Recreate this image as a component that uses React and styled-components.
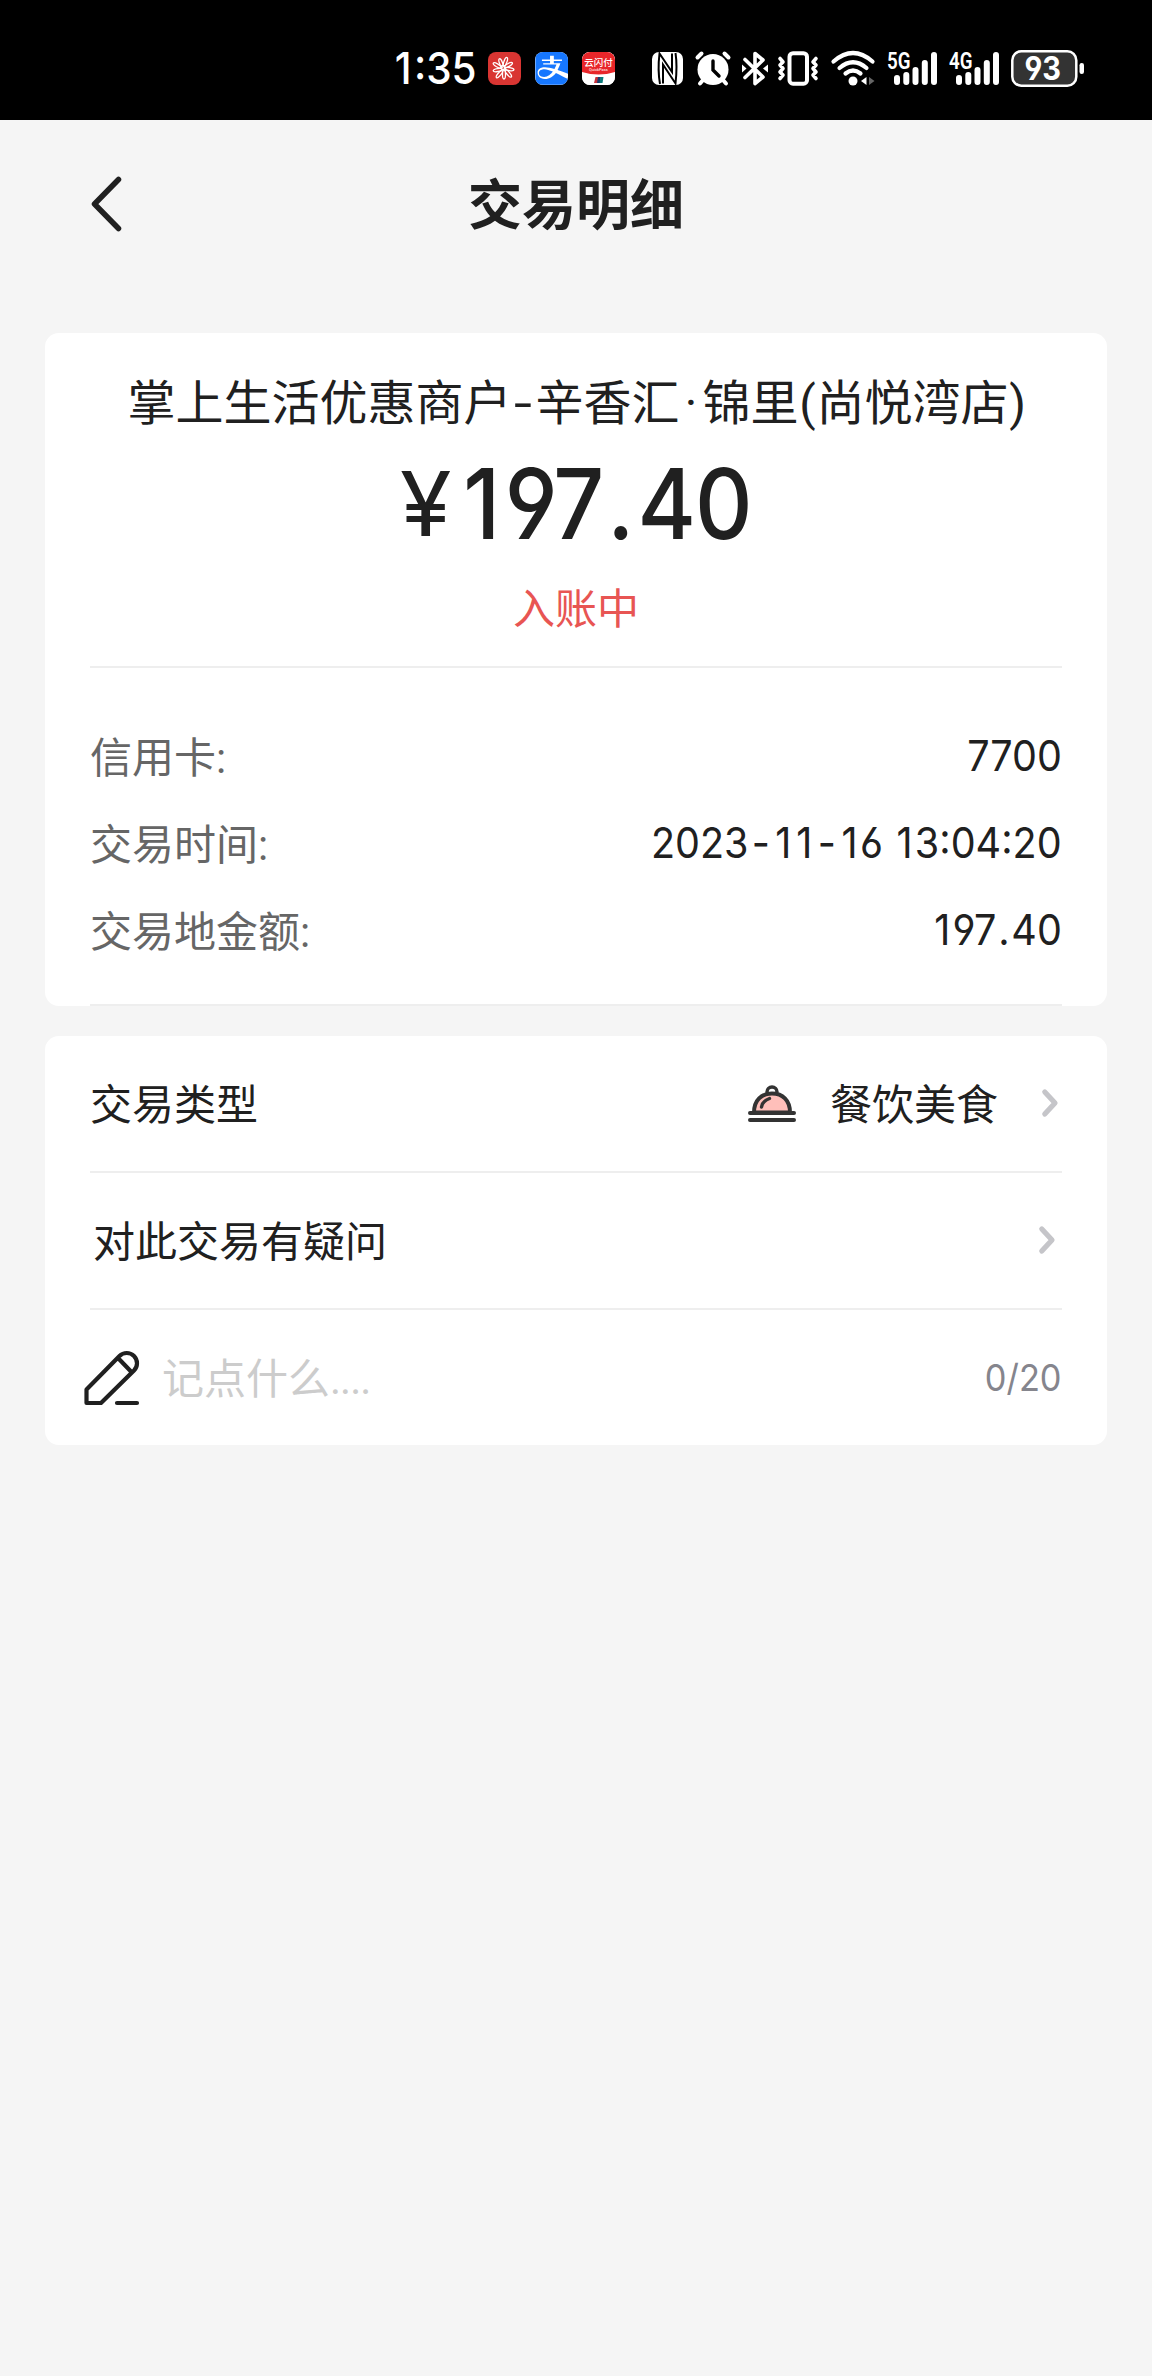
import React from 'react';
import styled, { createGlobalStyle } from 'styled-components';
import { FaAlipay } from "react-icons/fa6";

const GlobalStyle = createGlobalStyle`
  * {
    box-sizing: border-box;
  }

  body {
    margin: 0;
    background-color: #f5f5f5;
    color: #202020;
    font-family: Roboto, 'Noto Sans CJK SC', sans-serif;
  }

  svg {
    display: block;
    flex-shrink: 0;
    overflow: visible;
  }
`;

const Screen = styled.div`
  width: 1152px;
  min-height: 2376px;
  background-color: #f5f5f5;
`;

// narrow digits with open 6 and 9
const Digits = styled.span`
  display: inline-block;
  font-family: Inter, 'Noto Sans CJK SC', sans-serif;
  font-feature-settings: 'cv03', 'cv04', 'calt';
  white-space: pre;
`;

const Pad = styled.span`
  padding: 0 ${(props) => props.$size}em;
`;

const StatusBar = styled.div`
  display: flex;
  align-items: center;
  justify-content: flex-end;
  height: 120px;
  padding: 16px 68px 0 0;
  background-color: #000;
  color: #fff;
`;

const Clock = styled(Digits)`
  font-size: 44px;
  line-height: 44px;
  font-weight: 500;
  transform: scaleX(0.92);
  transform-origin: right;
`;

const StatusItem = styled.div`
  display: flex;
  margin-left: ${(props) => props.$gap}px;
`;

const AppBadge = styled.div`
  display: flex;
  align-items: center;
  justify-content: center;
  width: 33px;
  height: 33px;
  border-radius: 8px;
  overflow: hidden;
  margin-left: ${(props) => props.$gap}px;
  background: ${(props) => props.$bg};
  color: #1677ff;
`;

const Header = styled.div`
  display: grid;
  grid-template-columns: 90px 1fr 90px;
  align-items: center;
  height: 168px;
`;

const BackButton = styled.button`
  border: 0;
  padding: 0;
  background: none;
  justify-self: end;
  width: 0;
`;

const Title = styled.h1`
  margin: 6px 0 0;
  font-size: 54px;
  line-height: 80px;
  font-weight: 700;
  text-align: center;
`;

const Card = styled.section`
  margin: ${(props) => props.$top}px 45px 0;
  padding: 0 45px;
  height: ${(props) => props.$height}px;
  border-radius: 14px;
  background-color: #fff;
`;

const Summary = styled.div`
  display: flex;
  flex-direction: column;
  align-items: center;
  height: 335px;
  padding-top: 35px;
  border-bottom: 2px solid #eee;
`;

const Merchant = styled.div`
  padding-left: 2px;
  font-size: 48px;
  line-height: 72px;
  white-space: nowrap;
`;

const Mark = styled.span`
  display: inline-block;
  width: ${(props) => props.$width}px;
  text-align: center;
  transform: scaleX(${(props) => props.$stretch || 1});
`;

const Amount = styled.div`
  display: flex;
  align-items: baseline;
  width: 352px;
  margin-top: 14px;
  line-height: 100px;
`;

const Currency = styled(Digits)`
  flex: none;
  width: 58px;
  font-size: 89px;
  line-height: 100px;
  font-weight: 400;
  transform: translateY(-3px) scaleX(1.05);
  transform-origin: left;
`;

const Total = styled(Digits)`
  flex: none;
  font-size: 98px;
  line-height: 100px;
  font-weight: 500;
  letter-spacing: -1px;
  transform: scaleX(0.91);
  transform-origin: left;
`;

const Status = styled.div`
  margin-top: 22px;
  font-size: 42px;
  line-height: 62px;
  color: #e85553;
`;

const Details = styled.div`
  height: 338px;
  padding-top: 45px;
  border-bottom: 2px solid #eee;
`;

const DetailRow = styled.div`
  display: flex;
  justify-content: space-between;
  align-items: center;
  height: 87px;
`;

const Label = styled.span`
  padding-bottom: 4px;
  font-size: 42px;
  color: #666;
`;

const Value = styled(Digits)`
  font-size: 42.5px;
  padding-bottom: 2px;
  transform: scaleX(0.93);
  transform-origin: right;
`;

const OptionRow = styled.div`
  display: flex;
  align-items: center;
  height: 137px;
  padding-bottom: 2px;
  border-bottom: ${(props) => (props.$last ? '0' : '2px solid #eee')};
  font-size: 42px;
`;

const OptionLabel = styled.span`
  flex: 1;
  padding: 0 0 2px ${(props) => props.$indent || 0}px;
`;

const Category = styled.span`
  margin: 0 44px 0 33px;
  padding-bottom: 2px;
`;

const ChevronBox = styled.span`
  margin-right: ${(props) => props.$right}px;
`;

const PenBox = styled.span`
  margin-left: -6px;
`;

const Note = styled.span`
  flex: 1;
  margin-left: 22px;
  padding-bottom: 4px;
  color: #ccc;
`;

const Dots = styled.span`
  letter-spacing: -1px;
`;

const Counter = styled(Digits)`
  font-size: 37px;
  color: #85858d;
  transform: scaleX(0.93);
  transform-origin: right;
`;

const FlowerIcon = () => (
  <svg width="33" height="33" viewBox="0 0 33 33" fill="none" stroke="#fff" strokeWidth="1.300">
    {[10, 50, 90, 130, 170, 210, 250, 290, 330].map((angle, i) => (
      <ellipse key={angle} cx={i % 2 ? 22.5 : 21.5} cy="16" rx="4.500" ry="1.500" transform={`rotate(${angle} 15.5 16.5)`} />
    ))}
    <circle cx="15" cy="15.500" r="2" />
  </svg>
);

const UnionPayIcon = () => (
  <svg width="33" height="33" viewBox="0 0 33 33">
    <rect width="33" height="33" fill="#fff" />
    <path d="M0 0H33V20Q16.500 25 0 20Z" fill="#e8262a" />
    <text x="16.500" y="13.500" fontSize="9.500" fontWeight="500" fill="#fff" textAnchor="middle">云闪付</text>
    <text x="16.500" y="19" fontSize="4" fill="#fff" textAnchor="middle">QuickPass</text>
    <path d="M13.500 25h3.500l-1 6h-4z" fill="#c5303b" />
    <path d="M16 25h3l-1 6h-3z" fill="#173f6e" />
    <path d="M18.500 25h3l-1 6h-3z" fill="#0a7a7a" />
  </svg>
);

const NfcIcon = () => (
  <svg width="31" height="33" viewBox="0 0 31 33">
    <rect width="31" height="33" rx="7" fill="#fff" />
    <path d="M11 31.500V12.500L23.500 31.500Q25.500 14 23.500 1M20 1.500V20L7.500 1.500Q5.500 18 8 32" fill="none" stroke="#000" strokeWidth="2" />
  </svg>
);

const AlarmIcon = () => (
  <svg width="36" height="35" viewBox="0 0 36 35" fill="none" stroke="#fff" strokeWidth="4" strokeLinecap="round">
    <circle cx="18" cy="18.500" r="15.500" fill="#fff" stroke="none" />
    <path d="M2.500 6.500L6.500 2.500M33.500 6.500L29.500 2.500M8 29L5 32.500M28 29L31 32.500" />
    <path d="M18 10V19L24 25" stroke="#000" strokeWidth="3.400" />
  </svg>
);

const BluetoothIcon = () => (
  <svg width="26" height="35" viewBox="0 0 26 35" fill="none" stroke="#fff" strokeWidth="3.600" strokeLinejoin="round" strokeLinecap="round">
    <path d="M3 8.500L21 26L13 32.500V2.500L21 9L3 26.500" />
    <path d="M0 13.500L4.500 17.500L0 21.500ZM26 13.500L21 17.500L26 21.500Z" fill="#fff" stroke="none" />
  </svg>
);

const VibrateIcon = () => (
  <svg width="42" height="35" viewBox="0 0 42 35" fill="none" stroke="#fff" strokeWidth="4" strokeLinejoin="round" strokeLinecap="round">
    <rect x="12.500" y="2.200" width="17.500" height="30.500" rx="3.500" />
    <path d="M3 7.500L6 11L3 14L6 17.500L3 21L6 24L3 27.500M39 7.500L36 11L39 14L36 17.500L39 21L36 24L39 27.500" strokeWidth="3.600" />
  </svg>
);

const WifiIcon = () => (
  <svg width="44" height="35" viewBox="0 0 44 35" fill="none" stroke="#fff" strokeWidth="4.200" strokeLinecap="round">
    <path d="M2.500 10.500Q22-6.500 41.500 10.500M8.500 17Q22 5.500 35.500 17M14.500 22.500Q22 16.500 29.500 22.500" />
    <circle cx="22" cy="30" r="4.500" fill="#fff" stroke="none" />
    <path d="M35.500 26V34L30 30Z" fill="#fff" stroke="none" />
    <path d="M38 26V34L43.500 30Z" fill="#666" stroke="none" />
  </svg>
);

const SignalIcon = ({ label }) => (
  <svg width="51" height="35" viewBox="0 0 51 35">
    <g stroke="#fff" strokeWidth="6" strokeLinecap="round">
      <path d="M10 27V31M19.300 24V31M28.500 19V31M37.800 12V31M47 4V31" />
    </g>
    <text x="0" y="17.500" fontSize="23" fontWeight="600" fill="#fff" textLength="23.500" lengthAdjust="spacingAndGlyphs" stroke="#000" strokeWidth="1.500" paintOrder="stroke">{label}</text>
  </svg>
);

const BatteryText = styled.text`
  font-family: Inter, sans-serif;
  font-feature-settings: 'cv04';
  font-size: 32px;
  font-weight: 700;
`;

const BatteryIcon = () => (
  <svg width="73" height="37" viewBox="0 0 73 37">
    <rect x="1.300" y="1.300" width="64" height="34.400" rx="9" fill="#333" stroke="#fff" strokeWidth="2.500" />
    <rect x="68.500" y="13" width="4.500" height="11" rx="2.200" fill="#fff" />
    <BatteryText x="13.500" y="29.500" fill="#fff" textLength="36.500" lengthAdjust="spacingAndGlyphs">93</BatteryText>
  </svg>
);

const BackIcon = () => (
  <svg width="32" height="56" viewBox="0 0 32 56" fill="none" stroke="#202020" strokeWidth="5.500" strokeLinecap="round" strokeLinejoin="round">
    <path d="M28.500 3.500L4.500 28L28.500 52.500" />
  </svg>
);

const DishIcon = () => (
  <svg width="50" height="40" viewBox="0 0 50 40" fill="none" stroke="#333" strokeWidth="4" strokeLinecap="round">
    <path d="M7 29.500C7 17 14.500 10.500 25 10.500S43 17 43 29.500Z" fill="#ffbfba" />
    <path d="M20 9a5 5 0 1 1 10 0" strokeWidth="3.500" />
    <path d="M14.500 24Q15.500 18 22.500 15.500" strokeWidth="3.400" />
    <path d="M3 30H47M3 37H47" />
  </svg>
);

const Chevron = () => (
  <svg width="16" height="28" viewBox="0 0 16 28" fill="none" stroke="#c5c5c9" strokeWidth="5.200" strokeLinecap="round" strokeLinejoin="round">
    <path d="M2.800 3L13 14L2.800 25" />
  </svg>
);

const PenIcon = () => (
  <svg width="56" height="56" viewBox="0 0 56 56" fill="none" stroke="#202020" strokeWidth="4.200" strokeLinecap="round" strokeLinejoin="round">
    <path d="M2.500 53V39.500L35.500 6A10.200 10.200 0 0 1 50 20.500L17 53ZM34 8L47 21.500M33 53H53" />
  </svg>
);

// evens out the characters that are narrower than the other digits
const pads = { '1': 0.06, '-': 0.08, '.': 0.045 };

const spaced = (text) =>
  text.split(/([-1.])/).map((part, i) =>
    pads[part] ? <Pad key={i} $size={pads[part]}>{part}</Pad> : part
  );

const details = [
  { label: '信用卡:', value: '7700' },
  { label: '交易时间:', value: '2023-11-16 13:04:20' },
  { label: '交易地金额:', value: '197.40' },
];

const App = () => {
  return (
    <Screen>
      <GlobalStyle />
      <StatusBar>
        <Clock>{spaced('1:35')}</Clock>
        <AppBadge $gap={11} $bg="#d93532"><FlowerIcon /></AppBadge>
        <AppBadge $gap={14} $bg="#fff"><FaAlipay size={38} /></AppBadge>
        <AppBadge $gap={14} $bg="#fff"><UnionPayIcon /></AppBadge>
        <StatusItem $gap={37}><NfcIcon /></StatusItem>
        <StatusItem $gap={12}><AlarmIcon /></StatusItem>
        <StatusItem $gap={11}><BluetoothIcon /></StatusItem>
        <StatusItem $gap={9}><VibrateIcon /></StatusItem>
        <StatusItem $gap={12}><WifiIcon /></StatusItem>
        <StatusItem $gap={12}><SignalIcon label="5G" /></StatusItem>
        <StatusItem $gap={11}><SignalIcon label="4G" /></StatusItem>
        <StatusItem $gap={11}><BatteryIcon /></StatusItem>
      </StatusBar>

      <Header>
        <BackButton aria-label="返回"><BackIcon /></BackButton>
        <Title>交易明细</Title>
      </Header>

      <Card $top={45} $height={673}>
        <Summary>
          <Merchant>
            掌上生活优惠商户<Mark $width={24} $stretch={1.35}>-</Mark>辛香汇<Mark $width={23}>·</Mark>锦里<Mark $width={18}>(</Mark>尚悦湾店<Mark $width={18}>)</Mark>
          </Merchant>
          <Amount>
            <Currency>¥</Currency>
            <Total>{spaced('197.40')}</Total>
          </Amount>
          <Status>入账中</Status>
        </Summary>
        <Details>
          {details.map((item) => (
            <DetailRow key={item.label}>
              <Label>{item.label}</Label>
              <Value>{spaced(item.value)}</Value>
            </DetailRow>
          ))}
        </Details>
      </Card>

      <Card $top={30} $height={409}>
        <OptionRow>
          <OptionLabel>交易类型</OptionLabel>
          <DishIcon />
          <Category>餐饮美食</Category>
          <ChevronBox $right={4}><Chevron /></ChevronBox>
        </OptionRow>
        <OptionRow>
          <OptionLabel $indent={3}>对此交易有疑问</OptionLabel>
          <ChevronBox $right={7}><Chevron /></ChevronBox>
        </OptionRow>
        <OptionRow $last>
          <PenBox><PenIcon /></PenBox>
          <Note>记点什么<Dots>....</Dots></Note>
          <Counter>0/20</Counter>
        </OptionRow>
      </Card>
    </Screen>
  );
};

export default App;
